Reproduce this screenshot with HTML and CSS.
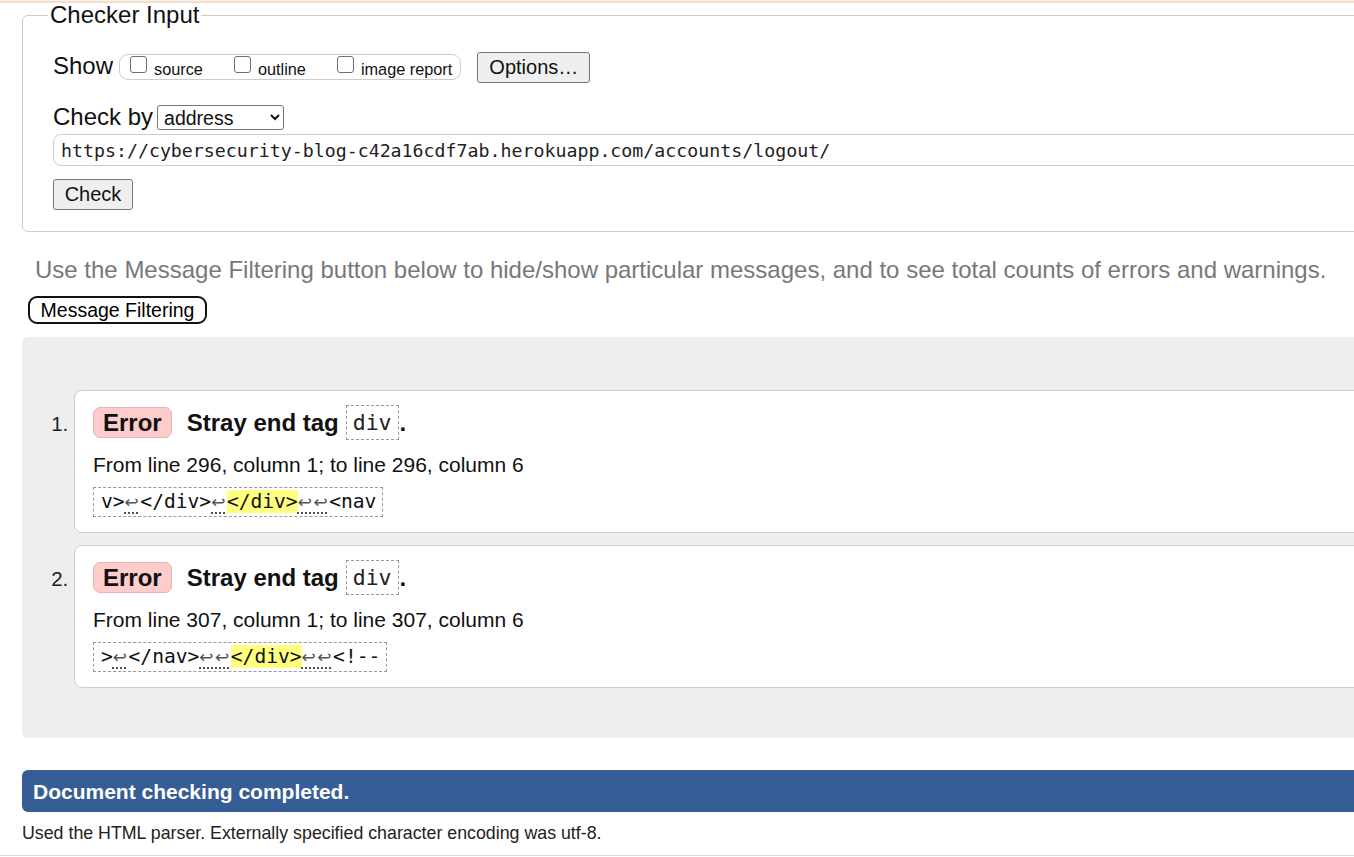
FILE: index.html
```html
<!DOCTYPE html>
<html lang="en">
<head>
<meta charset="utf-8">
<title>Nu Html Checker</title>
<link rel="stylesheet" href="styles.css">
</head>
<body>
<div class="topbar"></div>
<main class="page">
  <fieldset class="checker">
    <legend class="checker-legend">Checker Input</legend>
    <div class="show-row">
      <span class="row-label">Show</span>
      <div class="show-group">
        <label class="opt"><input type="checkbox" class="cb"><span class="opt-text">source</span></label>
        <label class="opt"><input type="checkbox" class="cb"><span class="opt-text">outline</span></label>
        <label class="opt"><input type="checkbox" class="cb"><span class="opt-text">image report</span></label>
      </div>
      <button class="btn btn-options" type="button">Options…</button>
    </div>
    <div class="checkby-row">
      <span class="row-label">Check by</span>
      <select class="sel"><option>address</option><option>file upload</option><option>text input</option></select>
    </div>
    <input class="url" type="text" value="https://cybersecurity-blog-c42a16cdf7ab.herokuapp.com/accounts/logout/">
    <button class="btn btn-check" type="button">Check</button>
  </fieldset>

  <p class="hint">Use the Message Filtering button below to hide/show particular messages, and to see total counts of errors and warnings.</p>
  <button class="filter-btn" type="button">Message Filtering</button>

  <section class="results">
    <ol class="msgs">
      <li class="msg">
        <div class="msg-head"><span class="badge">Error</span><span class="msg-title">Stray end tag</span><code class="tag">div</code><span class="dot">.</span></div>
        <p class="loc">From line 296, column 1; to line 296, column 6</p>
        <code class="extract">v&gt;<span class="lf">↩</span>&lt;/div&gt;<span class="lf">↩</span><mark class="hl">&lt;/div&gt;</mark><span class="lf">↩↩</span>&lt;nav</code>
      </li>
      <li class="msg">
        <div class="msg-head"><span class="badge">Error</span><span class="msg-title">Stray end tag</span><code class="tag">div</code><span class="dot">.</span></div>
        <p class="loc">From line 307, column 1; to line 307, column 6</p>
        <code class="extract">&gt;<span class="lf">↩</span>&lt;/nav&gt;<span class="lf">↩↩</span><mark class="hl">&lt;/div&gt;</mark><span class="lf">↩↩</span>&lt;!--</code>
      </li>
    </ol>
  </section>

  <h2 class="done">Document checking completed.</h2>
  <p class="details">Used the HTML parser. Externally specified character encoding was utf-8.</p>
</main>
<div class="footer-line"></div>
</body>
</html>
```

FILE: styles.css
```css
html {
  overflow: hidden;
  background: #fff;
}

body {
  margin: 0;
  font-family: "Liberation Sans", Arial, sans-serif;
  color: #111;
  background: #fff;
}

.topbar {
  height: 2px;
  border-top: 1px solid #fbf1e8;
  background: #f2dfcc;
}

.page {
  width: 1560px;
  padding-left: 22px;
}

/* Checker input fieldset */
.checker {
  margin: 0;
  padding: 0 0 21px 30px;
  border: 1px solid #cccccc;
  border-radius: 6px;
}

.checker-legend {
  margin-left: -5px;
  padding: 0 2px;
  font-size: 24px;
  line-height: 24px;
  color: #111;
}

.show-row {
  display: flex;
  align-items: flex-start;
  margin-top: 25px;
}

.row-label {
  font-size: 24px;
  line-height: 28px;
  color: #111;
}

.show-group {
  display: flex;
  align-items: flex-start;
  height: 24px;
  margin: 2px 0 0 6px;
  padding: 0 8px 0 10px;
  border: 1px solid #cccccc;
  border-radius: 9px;
}

.opt {
  display: flex;
  align-items: flex-start;
  margin-right: 31px;
}

.opt:last-child {
  margin-right: 0;
}

.cb {
  appearance: none;
  -webkit-appearance: none;
  width: 17px;
  height: 17px;
  margin: 1px 7px 0 0;
  border: 1px solid #6f6f6f;
  border-radius: 3px;
  background: #fff;
}

.opt-text {
  margin-top: 5px;
  font-size: 16.3px;
  line-height: 18px;
  color: #111;
}

.btn {
  font-family: "Liberation Sans", Arial, sans-serif;
  color: #111;
  background: #efefef;
  border: 1px solid #767676;
  border-radius: 3px;
  padding: 0;
}

.btn-options {
  width: 113px;
  height: 31px;
  margin-left: 16px;
  font-size: 20px;
}

.checkby-row {
  display: flex;
  align-items: baseline;
  margin-top: 20px;
}

.sel {
  width: 127px;
  height: 25px;
  margin-left: 4px;
  padding: 0 0 0 2px;
  font-family: "Liberation Sans", Arial, sans-serif;
  font-size: 19.5px;
  color: #111;
  background: #fff;
  border: 1px solid #767676;
  border-radius: 3px;
}

.url {
  display: block;
  box-sizing: border-box;
  width: 1600px;
  height: 32px;
  margin: 3px 0 0 0;
  padding: 0 0 0 7px;
  font-family: "DejaVu Sans Mono", "Liberation Mono", monospace;
  font-size: 18.25px;
  color: #222;
  border: 1px solid #cccccc;
  border-radius: 8px;
  background: #fff;
}

.btn-check {
  display: block;
  width: 80px;
  height: 31px;
  margin-top: 13px;
  font-size: 20px;
}

/* Hint and filter */
.hint {
  margin: 25px 0 0 0;
  padding-left: 13px;
  font-size: 24px;
  line-height: 26px;
  color: #787878;
  white-space: nowrap;
}

.filter-btn {
  display: block;
  box-sizing: border-box;
  width: 179px;
  height: 28px;
  margin: 13px 0 0 6px;
  padding: 0;
  font-family: "Liberation Sans", Arial, sans-serif;
  font-size: 19.5px;
  color: #000;
  background: #fff;
  border: 2px solid #111;
  border-radius: 9px;
}

/* Results */
.results {
  margin-top: 13px;
  padding: 53px 0 50px 0;
  background: #eeeeee;
  border-radius: 6px 0 0 6px;
}

.msgs {
  margin: 0;
  padding: 0 0 0 52px;
  list-style: decimal outside;
}

.msg {
  padding: 14px 18px 15px 18px;
  background: #fff;
  border: 1px solid #cccccc;
  border-radius: 8px;
  font-size: 20.5px;
  color: #222;
}

.msg + .msg {
  margin-top: 12px;
}

.msg::marker {
  font-size: 20.5px;
  color: #222;
}

.msg-head {
  display: flex;
  align-items: center;
  height: 35px;
}

.badge {
  box-sizing: border-box;
  height: 31px;
  padding: 0 9px;
  font-size: 24px;
  line-height: 29px;
  font-weight: bold;
  color: #111;
  background: #ffcccc;
  border: 1px solid #e6b5b5;
  border-radius: 7px;
}

.msg-title {
  margin-left: 15px;
  font-size: 24px;
  font-weight: bold;
  color: #111;
}

.tag {
  box-sizing: border-box;
  height: 35px;
  margin-left: 7px;
  padding: 0 6px;
  font-family: "DejaVu Sans Mono", "Liberation Mono", monospace;
  font-size: 21.5px;
  line-height: 33px;
  color: #222;
  border: 1px dashed #999999;
}

.dot {
  font-size: 24px;
  font-weight: bold;
  color: #111;
  margin-left: 1px;
}

.loc {
  margin: 13px 0 0 0;
  font-size: 21px;
  line-height: 24px;
  color: #111;
}

.extract {
  display: inline-block;
  margin-top: 10px;
  padding: 3px 6px 3px 7px;
  font-family: "DejaVu Sans Mono", "Liberation Mono", monospace;
  font-size: 19.6px;
  line-height: 22px;
  color: #111;
  border: 1px dashed #999999;
  white-space: pre;
}

.lf {
  color: #555;
  font-family: "DejaVu Sans", sans-serif;
  font-size: 17px;
  letter-spacing: 1.5px;
  text-decoration: underline dotted #333;
  text-underline-offset: 5px;
}

.hl {
  background: #ffff80;
  color: #111;
}

/* Completion bar */
.done {
  margin: 32px 0 0 0;
  height: 42px;
  padding-left: 11px;
  font-size: 21px;
  line-height: 43px;
  font-weight: bold;
  color: #fff;
  background: #365d95;
  border-radius: 6px 0 0 6px;
}

.details {
  margin: 11px 0 0 0;
  font-size: 17.8px;
  line-height: 21px;
  color: #222;
}

.footer-line {
  margin-top: 11px;
  border-top: 1px solid #dddddd;
}
```
